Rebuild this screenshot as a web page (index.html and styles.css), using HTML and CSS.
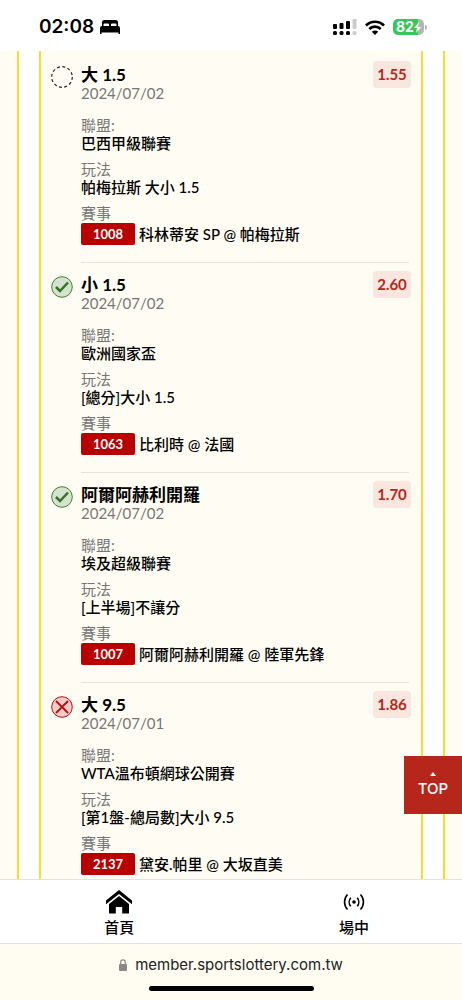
FILE: index.html
```html
<!doctype html>
<html lang="zh-Hant">
  <head>
    <meta charset="UTF-8" />
    <meta name="viewport" content="width=device-width, initial-scale=1.0" />
    <title>投注紀錄</title>
    <link rel="stylesheet" href="styles.css">
  </head>
  <body>
    <header class="status-bar">
      <div class="clock">
        <span>02:08</span>
        <svg width="20" height="14" viewBox="0 0 20 14"><path d="M2 6V2.500Q2 0 4.500 0h11Q18 0 18 2.500V6h-1.500V4.500Q16.500 3.500 15.500 3.500h-3.500q-1 0-1 1V6H9V4.500q0-1-1-1H4.500q-1 0-1 1V6z"/><path d="M2 6h16q2 0 2 2v6h-1.500v-1.500h-17V14H0V8q0-2 2-2z"/></svg>
      </div>
      <div class="indicators">
        <svg width="24" height="16" viewBox="0 0 24 16">
          <rect x="0" y="5" width="4" height="5" rx="1"/><rect x="6.500" y="4" width="4" height="6" rx="1"/><rect x="13" y="2" width="4" height="8" rx="1"/><rect x="19.500" y="0" width="4" height="10" rx="1" fill="#ccc"/>
          <rect x="0" y="12" width="4" height="4" rx="1.500"/><rect x="6.500" y="12" width="4" height="4" rx="1.500"/><rect x="13" y="12" width="4" height="4" rx="1.500"/><rect x="19.500" y="12" width="4" height="4" rx="1.500" fill="#ccc"/>
        </svg>
        <svg width="20" height="15" viewBox="0 0 20 15"><g fill="none" stroke="#000" stroke-width="2.700"><path d="M1 5.500a12.700 12.700 0 0 1 18 0"/><path d="M4.300 9a8.100 8.100 0 0 1 11.400 0"/></g><path d="M10 15 6.800 11.700a4.600 4.600 0 0 1 6.400 0z"/></svg>
        <div class="battery">
          <span>82</span>
          <svg width="7" height="11" viewBox="0 0 7 11"><path fill="#fff" d="M5 0 0 6h3L2 11l5-6H4z"/></svg>
        </div>
      </div>
    </header>

    <main class="content">
      <section class="outer">
        <div class="ticket">
          <article class="bet">
            <svg class="state" viewBox="0 0 22 22"><circle cx="11" cy="11" r="10.300" fill="none" stroke="#222" stroke-width="1.200" stroke-dasharray="3 2.390"/></svg>
            <div class="bet-body">
              <div class="bet-head">
                <div><h2>大 1.5</h2><time>2024/07/02</time></div>
                <span class="odds">1.55</span>
              </div>
              <dl>
                <dt>聯盟:</dt><dd>巴西甲級聯賽</dd>
                <dt>玩法</dt><dd>帕梅拉斯 大小 1.5</dd>
                <dt>賽事</dt><dd class="match"><span class="code">1008</span>科林蒂安 SP @ 帕梅拉斯</dd>
              </dl>
            </div>
          </article>

          <article class="bet">
            <svg class="state" viewBox="0 0 22 22"><circle cx="11" cy="11" r="10.300" fill="#d5e2cf" stroke="#3d8232"/><path d="m5 11 4 4 8-8.500" fill="none" stroke="#347327" stroke-width="2.500"/></svg>
            <div class="bet-body">
              <div class="bet-head">
                <div><h2>小 1.5</h2><time>2024/07/02</time></div>
                <span class="odds">2.60</span>
              </div>
              <dl>
                <dt>聯盟:</dt><dd>歐洲國家盃</dd>
                <dt>玩法</dt><dd>[總分]大小 1.5</dd>
                <dt>賽事</dt><dd class="match"><span class="code">1063</span>比利時 @ 法國</dd>
              </dl>
            </div>
          </article>

          <article class="bet">
            <svg class="state" viewBox="0 0 22 22"><circle cx="11" cy="11" r="10.300" fill="#d5e2cf" stroke="#3d8232"/><path d="m5 11 4 4 8-8.500" fill="none" stroke="#347327" stroke-width="2.500"/></svg>
            <div class="bet-body">
              <div class="bet-head">
                <div><h2>阿爾阿赫利開羅</h2><time>2024/07/02</time></div>
                <span class="odds">1.70</span>
              </div>
              <dl>
                <dt>聯盟:</dt><dd>埃及超級聯賽</dd>
                <dt>玩法</dt><dd>[上半場]不讓分</dd>
                <dt>賽事</dt><dd class="match"><span class="code">1007</span>阿爾阿赫利開羅 @ 陸軍先鋒</dd>
              </dl>
            </div>
          </article>

          <article class="bet">
            <svg class="state" viewBox="0 0 22 22"><circle cx="11" cy="11" r="10.300" fill="#f1cdc8" stroke="#b90d10"/><path d="m5 5 12 12m0-12L5 17" fill="none" stroke="#b90d10" stroke-width="1.800"/></svg>
            <div class="bet-body">
              <div class="bet-head">
                <div><h2>大 9.5</h2><time>2024/07/01</time></div>
                <span class="odds">1.86</span>
              </div>
              <dl>
                <dt>聯盟:</dt><dd>WTA溫布頓網球公開賽</dd>
                <dt>玩法</dt><dd>[第1盤-總局數]大小 9.5</dd>
                <dt>賽事</dt><dd class="match"><span class="code">2137</span>黛安.帕里 @ 大坂直美</dd>
              </dl>
            </div>
          </article>
        </div>
      </section>
    </main>

    <button class="to-top" type="button">
      <svg width="6" height="4" viewBox="0 0 6 4"><path fill="#fff" d="M0 4 3 0l3 4z"/></svg>
      TOP
    </button>

    <nav class="tab-bar">
      <a href="#">
        <svg width="26" height="24" viewBox="0 0 26 24"><path d="M13 0 0 10.500v3.700L13 4l13 10.200v-3.700z"/><path d="M13 6 3 14v9.500h6.800V17h6.400v6.500H23V14z"/></svg>
        首頁
      </a>
      <a href="#">
        <svg width="26" height="24" viewBox="0 0 26 24"><circle cx="13" cy="12" r="1.800"/><g fill="none" stroke="#000" stroke-width="1.600"><path d="M9.800 7.700a6.500 6.500 0 0 0 0 8.600M16.200 7.700a6.500 6.500 0 0 1 0 8.600M6.500 4.500a11 11 0 0 0 0 15M19.500 4.500a11 11 0 0 1 0 15"/></g></svg>
        場中
      </a>
    </nav>

    <footer class="address-bar">
      <div class="address">
        <svg width="8" height="12" viewBox="0 0 8 12"><rect y="5" width="8" height="7" rx="1" fill="#888"/><path d="M1.700 5.500V3.200a2.300 2.300 0 0 1 4.600 0v2.300" fill="none" stroke="#888" stroke-width="1.200"/></svg>
        <span>member.sportslottery.com.tw</span>
      </div>
      <div class="home-indicator"></div>
    </footer>
  </body>
</html>
```
FILE: styles.css
```css
:root {
  --cream: #fffdf3;
  --yellow: #ffd92e;
  --red: #b6261b;
  --line: #e6e3dc;
}
* { box-sizing: border-box; }
body { margin: 0; height: 100vh; display: flex; flex-direction: column; overflow: hidden; position: relative; background: #fff; color: #000; font-family: Lato, "Noto Sans CJK TC", sans-serif; font-size: 15px; line-height: 18px; }
svg { display: block; flex: none; }

.status-bar { flex: none; height: 51px; padding: 3px 38px 0 39px; display: flex; align-items: center; justify-content: space-between; }
.clock { display: flex; align-items: center; gap: 6px; font: 600 19px/24px Inter, sans-serif; }
.indicators { display: flex; align-items: center; gap: 8px; }
.battery { position: relative; width: 31px; height: 16px; padding-left: 3px; border-radius: 5px; display: flex; align-items: center; background: linear-gradient(90deg, #34c759 82%, #b5b5b5 82%); color: #fff; font: bold 14px/16px Inter, sans-serif; }
.battery::after { content: ""; position: absolute; right: -3px; top: 6px; width: 2px; height: 5px; border-radius: 0 2px 2px 0; background: #b5b5b5; }

.content { flex: 1; min-height: 0; overflow: hidden; padding: 0 17px; background: var(--cream); }
.outer { padding: 0 20px; border: solid var(--yellow); border-width: 0 2px; background: #fff; }
.ticket { padding: 2px 12px 0 10px; border: solid var(--yellow); border-width: 0 2px; background: var(--cream); }

.bet { display: flex; gap: 8px; }
.state { width: 22px; height: 22px; margin-top: 13px; }
.bet-body { flex: 1; padding: 13px 0 17px; border-bottom: 1px solid var(--line); }
.bet-head { display: flex; justify-content: space-between; align-items: flex-start; margin-bottom: 14px; }
h2 { margin: 0; font-size: 17px; font-weight: bold; line-height: 18px; }
time { display: block; color: #777; }
.odds { min-width: 38px; margin: -5px -2px 0 0; padding: 0 3px; border-radius: 4px; background: #f8e6df; color: var(--red); font-weight: bold; line-height: 27px; text-align: center; }
dl { margin: 0; }
dt { color: #777; }
dd { margin: 0 0 8px; font-weight: 500; }
dd.match { display: flex; align-items: center; gap: 4px; margin: 1px 0 0; }
.code { width: 54px; border-radius: 2px; background: #b80000; color: #fff; font-size: 13px; font-weight: bold; line-height: 22px; text-align: center; }

.to-top { position: absolute; right: 0; bottom: 186px; width: 58px; height: 58px; padding: 0; border: 0; display: flex; flex-direction: column; align-items: center; justify-content: center; gap: 4px; background: var(--red); color: #fff; font: 500 15px/18px Inter, sans-serif; cursor: pointer; }

.tab-bar { flex: none; display: flex; padding: 10px 0 7px 2px; border: solid #e2e2e2; border-width: 1px 0; background: #fff; }
.tab-bar a { flex: none; width: 51%; display: flex; flex-direction: column; align-items: center; gap: 4px; color: #000; font-weight: 500; text-decoration: none; }

.address-bar { flex: none; height: 56px; padding: 12px 0 9px; display: flex; flex-direction: column; align-items: center; justify-content: space-between; background: #fffcf2; }
.address { display: flex; align-items: center; gap: 8px; font: 15px/18px Inter, sans-serif; color: #222; }
.home-indicator { width: 165px; height: 5px; border-radius: 3px; background: #000; }
```
